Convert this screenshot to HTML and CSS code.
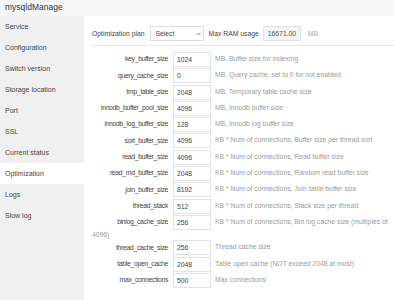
FILE: index.html
```
<!DOCTYPE html>
<html lang="en">
<head>
  <meta charset="UTF-8" />
  <title>mysqldManage</title>
  <link rel="stylesheet" href="styles.css">
</head>
<body>
  <div class="header">mysqldManage</div>

  <div class="layout">
    <ul class="menu">
      <li>Service</li>
      <li>Configuration</li>
      <li>Switch version</li>
      <li>Storage location</li>
      <li>Port</li>
      <li>SSL</li>
      <li>Current status</li>
      <li class="active">Optimization</li>
      <li>Logs</li>
      <li>Slow log</li>
    </ul>

    <div class="main">
      <div class="plan-row">
        <span class="plan-label">Optimization plan</span>
        <div class="select">
          <span>Select</span>
          <svg width="5" height="4" viewBox="0 0 5 4"><path d="M0.5 1 L2.5 3 L4.5 1" fill="none" stroke="#555" stroke-width="0.8"/></svg>
        </div>
        <span class="plan-label">Max RAM usage</span>
        <input class="ram" type="text" value="16671.00" readonly />
        <span class="unit">MB</span>
      </div>

      <div class="params">
        <div class="param"><span class="name">key_buffer_size</span><input type="text" value="1024" /><span class="desc">MB, Buffer size for indexing</span></div>
        <div class="param"><span class="name">query_cache_size</span><input type="text" value="0" /><span class="desc">MB, Query cache, set to 0 for not enabled</span></div>
        <div class="param"><span class="name">tmp_table_size</span><input type="text" value="2048" /><span class="desc">MB, Temporary table cache size</span></div>
        <div class="param"><span class="name">innodb_buffer_pool_size</span><input type="text" value="4096" /><span class="desc">MB, Innodb buffer size</span></div>
        <div class="param"><span class="name">innodb_log_buffer_size</span><input type="text" value="128" /><span class="desc">MB, Innodb log buffer size</span></div>
        <div class="param"><span class="name">sort_buffer_size</span><input type="text" value="4096" /><span class="desc">KB * Num of connections, Buffer size per thread sort</span></div>
        <div class="param"><span class="name">read_buffer_size</span><input type="text" value="4096" /><span class="desc">KB * Num of connections, Read buffer size</span></div>
        <div class="param"><span class="name">read_rnd_buffer_size</span><input type="text" value="2048" /><span class="desc">KB * Num of connections, Random read buffer size</span></div>
        <div class="param"><span class="name">join_buffer_size</span><input type="text" value="8192" /><span class="desc">KB * Num of connections, Join table buffer size</span></div>
        <div class="param"><span class="name">thread_stack</span><input type="text" value="512" /><span class="desc">KB * Num of connections, Stack size per thread</span></div>
        <div class="param"><span class="name">binlog_cache_size</span><input type="text" value="256" /><span class="desc">KB * Num of connections, Bin log cache size (multiples of 4096)</span></div>
        <div class="param"><span class="name">thread_cache_size</span><input type="text" value="256" /><span class="desc">Thread cache size</span></div>
        <div class="param"><span class="name">table_open_cache</span><input type="text" value="2048" /><span class="desc">Table open cache (NOT exceed 2048 at most)</span></div>
        <div class="param"><span class="name">max_connections</span><input type="text" value="500" /><span class="desc">Max connections</span></div>
      </div>
    </div>
  </div>
</body>
</html>
```

FILE: styles.css
```
body {
  margin: 0;
  font-family: "Liberation Sans", Arial, sans-serif;
  font-size: 7px;
  color: #333;
  background: white;
}

.header {
  height: 16px;
  line-height: 15px;
  padding-left: 5px;
  font-size: 8.5px;
  background: #f6f6f6;
  color: #333;
}

.layout {
  display: flex;
  height: 284px;
}

.menu {
  list-style: none;
  margin: 0;
  padding: 0;
  width: 84px;
  flex-shrink: 0;
  background: #f0f0f0;
}

.menu li {
  height: 21px;
  line-height: 21px;
  padding-left: 5px;
  color: #444;
}

.menu li.active {
  background: white;
}

.main {
  flex: 1;
  padding-left: 8px;
  font-size: 6.8px;
}

.plan-row {
  display: flex;
  align-items: center;
  margin-top: 10px;
  padding-bottom: 4px;
  border-bottom: 1px solid #e6e6e6;
}

.plan-label {
  color: #444;
  margin-right: 4px;
}

.select {
  display: flex;
  align-items: center;
  justify-content: space-between;
  box-sizing: border-box;
  width: 54px;
  height: 15px;
  padding: 0 2px 0 5px;
  border: 1px solid #ddd;
  margin: 0 5px 0 1px;
  color: #444;
}

.ram {
  box-sizing: border-box;
  width: 38px;
  height: 15px;
  margin: 0 7px 0 0;
  padding: 0 3px 0 4px;
  border: 1px solid #e2e2e2;
  background: #f5f5f5;
  font: inherit;
  color: #555;
  outline: none;
}

.unit {
  color: #aaa;
}

.params {
  padding-top: 6px;
}

.param {
  line-height: 9px;
  margin-bottom: 1.3px;
}

.name {
  display: inline-block;
  width: 76px;
  text-align: right;
  letter-spacing: -0.3px;
  color: #444;
}

.param input {
  box-sizing: border-box;
  width: 38px;
  height: 15px;
  margin: 0 4px 0 5px;
  padding: 0 3px;
  border: 1px solid #e2e2e2;
  font: inherit;
  color: #444;
  vertical-align: middle;
  outline: none;
}

.desc {
  color: #9a9a9a;
}
```
